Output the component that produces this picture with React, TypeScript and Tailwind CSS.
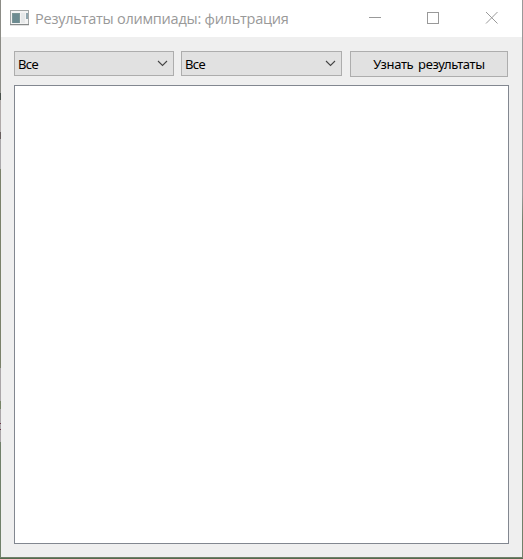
function Combo({ value, width }: { value: string; width: string }) {
  return (
    <button className={`flex h-[25px] ${width} items-center justify-between border border-[#adadad] bg-[#e1e1e1] pl-[3px] pr-[5px] text-left`}>
      <span className="relative top-[1px] text-[13px] leading-none tracking-[-0.6px] text-black">{value}</span>
      <svg width="11" height="7" viewBox="0 0 11 7" fill="none" stroke="#444" strokeWidth="1.1">
        <path d="M1 1 L5.5 5.5 L10 1" />
      </svg>
    </button>
  );
}

function AppIcon() {
  return (
    <svg className="relative -top-[0.5px]" width="19" height="16" viewBox="0 0 19 16" shapeRendering="crispEdges">
      <rect width="19" height="16" fill="#a3a7a7" />
      <rect x="1" y="1" width="17" height="13" fill="#f3f3f3" />
      <rect x="2" y="3" width="8" height="10" fill="#7c9696" />
      <rect x="3" y="4" width="6" height="9" fill="#6c8b91" />
      <rect x="11" y="3" width="4" height="10" fill="#e6e8e9" />
      <rect x="16" y="3" width="2" height="6" fill="#8fa5ae" />
      <rect y="14" width="19" height="1" fill="#858989" />
      <rect y="15" width="19" height="1" fill="#e2e2e2" />
    </svg>
  );
}

function TitleBar() {
  return (
    <header className="flex h-[37px] items-center bg-white pl-[9px] pr-6">
      <AppIcon />
      <h1 className="ml-[6px] grow whitespace-nowrap pt-px font-['Open_Sans','Noto_Sans',sans-serif] text-[14.5px] leading-5 tracking-[-0.24px] text-[#999]">
        Результаты олимпиады: фильтрация
      </h1>
      <svg className="relative -top-px shrink-0" width="130" height="13" viewBox="0 0 130 13" fill="none" stroke="#999">
        <path d="M1 6.5 H13" />
        <rect x="59.5" y="1.5" width="11" height="11" />
        <path d="M118 1 L129.5 12.5 M129.5 1 L118 12.5" />
      </svg>
    </header>
  );
}

export default function App() {
  return (
    <div className="flex h-[559px] w-[523px] flex-col bg-[#556b4f] font-['Noto_Sans','Open_Sans',sans-serif]">
      <div className="flex h-[557px]">
        <div className="flex w-px flex-col bg-[#7b846d]">
          <div className="h-[93px] bg-[#8c8c86]" />
          <div className="h-[7px] bg-[#49504b]" />
          <div className="h-[32px] bg-[#b0aaa9]" />
          <div className="h-[7px] bg-[#69605f]" />
          <div className="h-[30px] bg-[#aaa8aa]" />
          <div className="h-[199px] bg-[#7b826b]" />
          <div className="h-[33px] bg-[#aaa6a8]" />
          <div className="h-[8px] bg-[#788568]" />
          <div className="h-[14px] bg-[#aaa6a8]" />
          <div className="h-px bg-[#683646]" />
          <div className="h-[5px] bg-[#aaa6a8]" />
          <div className="h-px bg-[#683646]" />
          <div className="h-[12px] bg-[#aaa6a8]" />
          <div className="grow bg-[#71806a]" />
        </div>
        <div className="flex w-[521px] flex-col bg-[#efefef]">
          <TitleBar />
          <main className="flex grow flex-col px-[13px] pb-[13px] pt-[14px]">
            <div className="flex h-[34px] items-start">
              <Combo value="Все" width="w-[160px]" />
              <div className="ml-[7px] flex">
                <Combo value="Все" width="w-[161px]" />
              </div>
              <button className="ml-2 flex h-[26px] w-[158px] items-center justify-center border border-[#adadad] bg-[#e1e1e1] text-black">
                <span className="whitespace-nowrap text-[13px] leading-none tracking-[-0.35px] [word-spacing:1.7px]">Узнать результаты</span>
              </button>
            </div>
            <div className="h-[459px] w-[495px] border border-[#828790] bg-white" />
          </main>
        </div>
        <div className="w-px bg-linear-to-b from-[#999] from-35% to-[#71806a] to-40%" />
      </div>
      <div className="h-px bg-[#71806a]" />
    </div>
  );
}
